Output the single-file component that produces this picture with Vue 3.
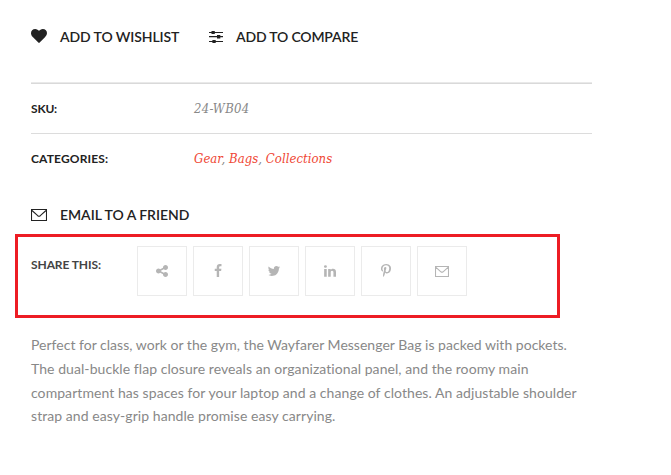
<script setup>
const shares = [
  { name: 'Share', path: 'M1344 1024q133 0 226.5 93.5t93.5 226.5-93.5 226.5-226.5 93.5-226.5-93.5-93.5-226.5q0-12 2-34l-360-180q-92 86-218 86-133 0-226.5-93.5t-93.5-226.5 93.5-226.5 226.5-93.5q126 0 218 86l360-180q-2-22-2-34 0-133 93.5-226.5t226.5-93.5 226.5 93.5 93.5 226.5-93.5 226.5-226.5 93.5q-126 0-218-86l-360 180q2 22 2 34t-2 34l360 180q92-86 218-86z' },
  { name: 'Facebook', path: 'M1343 12v264h-157q-86 0-116 36t-30 108v189h293l-39 296h-254v759h-306v-759h-255v-296h255v-218q0-186 104-288.5t277-102.5q147 0 228 12z' },
  { name: 'Twitter', path: 'M1684 408q-67 98-162 167 1 14 1 42 0 130-38 259.5t-115.5 248.5-184.5 210.5-258 146-323 54.5q-271 0-496-145 35 4 78 4 225 0 401-138-105-2-188-64.5t-114-159.5q33 5 61 5 43 0 85-11-112-23-185.5-111.5t-73.5-205.5v-4q68 38 146 41-66-44-105-115t-39-154q0-88 44-163 121 149 294.5 238.5t371.5 99.5q-8-38-8-74 0-134 94.5-228.5t228.5-94.5q140 0 236 102 109-21 205-78-37 115-142 178 93-10 186-50z' },
  { name: 'LinkedIn', path: 'M477 625v991h-330v-991h330zm21-306q1 73-50.5 122t-135.5 49h-2q-82 0-132-49t-50-122q0-74 51.5-122.5t134.5-48.5 133 48.5 51 122.5zm1166 729v568h-329v-530q0-105-40.5-164.5t-126.5-59.5q-63 0-105.5 34.5t-63.5 85.5q-11 30-11 81v553h-329q2-399 2-647t-1-296l-1-48h329v144h-2q20-32 41-56t56.5-52 87-43.5 114.5-15.5q171 0 275 113.5t104 332.5z' },
  { name: 'Pinterest', path: 'M256 597q0-108 37.5-203.5t103.5-166.5 152-123 185-78 202-26q158 0 294 66.5t221 193.5 85 287q0 96-19 188t-60 177-100 149.5-145 103-189 38.5q-68 0-135-32t-96-88q-10 39-28 112.5t-23.5 95-20.5 71-26 71-32 62.5-46 77.5-62 86.5l-14 5-9-10q-15-157-15-188 0-92 21.5-206.5t66.5-287.5 52-203q-32-65-32-169 0-83 52-156t132-73q61 0 95 40.5t34 102.5q0 66-44 191t-44 187q0 63 45 104.5t109 41.5q55 0 102-25t78.5-68 56-95 38-110.5 20-111 6.5-99.5q0-173-109.5-269.5t-285.5-96.5q-200 0-334 129.5t-134 328.5q0 44 12.5 85t27 65 27 45.5 12.5 30.5q0 28-15 73t-37 45q-2 0-17-3-51-15-90.5-56t-61-94.5-32.5-108-11-106.5z' }
]
</script>

<template>
  <main class="product">
    <div class="actions">
      <a class="action wishlist">
        <svg width="16" height="14" viewBox="0 128 1792 1536" preserveAspectRatio="none"><path d="M896 1664q-26 0-44-18l-624-602q-10-8-27.5-26t-55.5-65.5-68-97.5-53.5-121-23.5-138q0-220 127-344t351-124q62 0 126.5 21.5t120 58 95.5 68.5 76 68q36-36 76-68t95.5-68.5 120-58 126.5-21.5q224 0 351 124t127 344q0 221-229 450l-623 600q-18 18-44 18z" /></svg>
        <span>ADD TO WISHLIST</span>
      </a>
      <a class="action compare">
        <svg width="14" height="12" viewBox="0 0 14 12"><path d="M0 1h14v1H0zM0 5h14v1.2H0zM0 10h14v1H0zM2.5 0h3.3v3H2.5zM8 4h3.3v3.5H8zM3.4 9h3.3v3H3.4z" /></svg>
        <span>ADD TO COMPARE</span>
      </a>
    </div>

    <dl class="details">
      <div class="row"><dt>SKU:</dt><dd class="sku">24-WB04</dd></div>
      <div class="row"><dt class="cats-label">CATEGORIES:</dt><dd class="cats"><a>Gear</a>, <a>Bags</a>, <a>Collections</a></dd></div>
    </dl>

    <a class="action email">
      <svg width="16" height="12" viewBox="0 0 16 12"><path class="line" d="M.5.5h15v11H.5zM1 1.5l5.7 5.2q1.3 1 2.6 0L15 1.5" /></svg>
      <span>EMAIL TO A FRIEND</span>
    </a>

    <section class="share">
      <span class="share-label">SHARE THIS:</span>
      <div class="buttons">
        <a v-for="s in shares" :key="s.name" class="button">
          <svg width="14" height="14" viewBox="0 0 1792 1792"><path :d="s.path" /></svg>
        </a>
        <a class="button">
          <svg width="14" height="11" viewBox="0 0 14 11"><path class="line" d="M.5.5h13v10H.5zM1 1.3l4.9 4.5q1.1.9 2.2 0L13 1.3" /></svg>
        </a>
      </div>
    </section>

    <p class="description">
      <span>Perfect for class, work or the gym, the Wayfarer Messenger Bag is packed with pockets.</span>
      <span>The dual-buckle flap closure reveals an organizational panel, and the roomy main</span>
      <span>compartment has spaces for your laptop and a change of clothes. An adjustable shoulder</span>
      <span>strap and easy-grip handle promise easy carrying.</span>
    </p>
  </main>
</template>

<style>
body {
  margin: 0;
  background: #fff;
}
</style>

<style scoped>
.product {
  box-sizing: border-box;
  width: 671px;
  height: 475px;
  padding: 27px 79px 0 31px;
  font-family: Lato, sans-serif;
  color: #222;
  overflow: hidden;
}
svg {
  display: block;
  fill: currentColor;
  flex: none;
}
.line {
  fill: none;
  stroke: currentColor;
  stroke-width: 1.1;
}
.actions {
  display: flex;
  height: 55px;
  align-items: flex-start;
}
.action {
  display: flex;
  align-items: center;
  height: 20px;
  font-size: 14px;
  font-weight: 600;
  line-height: 20px;
  white-space: nowrap;
}
.wishlist {
  width: 178px;
  gap: 13px;
  letter-spacing: -0.1px;
}
.wishlist svg {
  margin-top: -2px;
}
.compare {
  gap: 13px;
  letter-spacing: -0.18px;
}
.details {
  margin: 0;
  border-top: 1px solid #e9e9e9;
  box-shadow: inset 0 1px #d9d9d9;
  padding-top: 1px;
}
.row {
  box-sizing: border-box;
  display: flex;
  align-items: center;
  height: 50px;
}
.row:first-child {
  border-bottom: 1px solid #dcdcdc;
}
.row:last-child {
  padding-bottom: 2px;
}
dt {
  width: 163px;
  font-size: 12px;
  font-weight: 700;
}
.row:first-child dt {
  letter-spacing: -0.2px;
}
.row dt.cats-label {
  letter-spacing: 0.15px;
}
dd {
  margin: 0;
  font-family: "DejaVu Serif Condensed", "DejaVu Serif", serif;
  font-stretch: condensed;
  font-style: italic;
  font-size: 13px;
  color: #888;
}
.sku {
  letter-spacing: 0.25px;
}
.cats {
  letter-spacing: 0.04px;
}
dd a {
  color: #ef4836;
}
.email {
  margin-top: 21px;
  gap: 13px;
  letter-spacing: -0.03px;
}
.share {
  box-sizing: border-box;
  display: flex;
  width: 545px;
  height: 84px;
  margin: 9px 0 0 -16px;
  padding: 9px 0 0 13px;
  border: 3px solid #ed1c24;
}
.share-label {
  width: 106px;
  padding-top: 10px;
  font-size: 12px;
  line-height: 18px;
  font-weight: 700;
  letter-spacing: -0.1px;
  color: #444;
}
.buttons {
  display: flex;
  gap: 6px;
}
.button {
  box-sizing: border-box;
  display: flex;
  align-items: center;
  justify-content: center;
  width: 50px;
  height: 50px;
  border: 1px solid #ebebeb;
  color: #b5b5b5;
}
.description {
  margin: 15px 0 0;
  font-size: 14px;
  line-height: 23.8px;
  color: #888;
}
.description span {
  display: block;
  white-space: nowrap;
  letter-spacing: 0.065px;
}
.description span:first-child {
  letter-spacing: 0.018px;
}
</style>
